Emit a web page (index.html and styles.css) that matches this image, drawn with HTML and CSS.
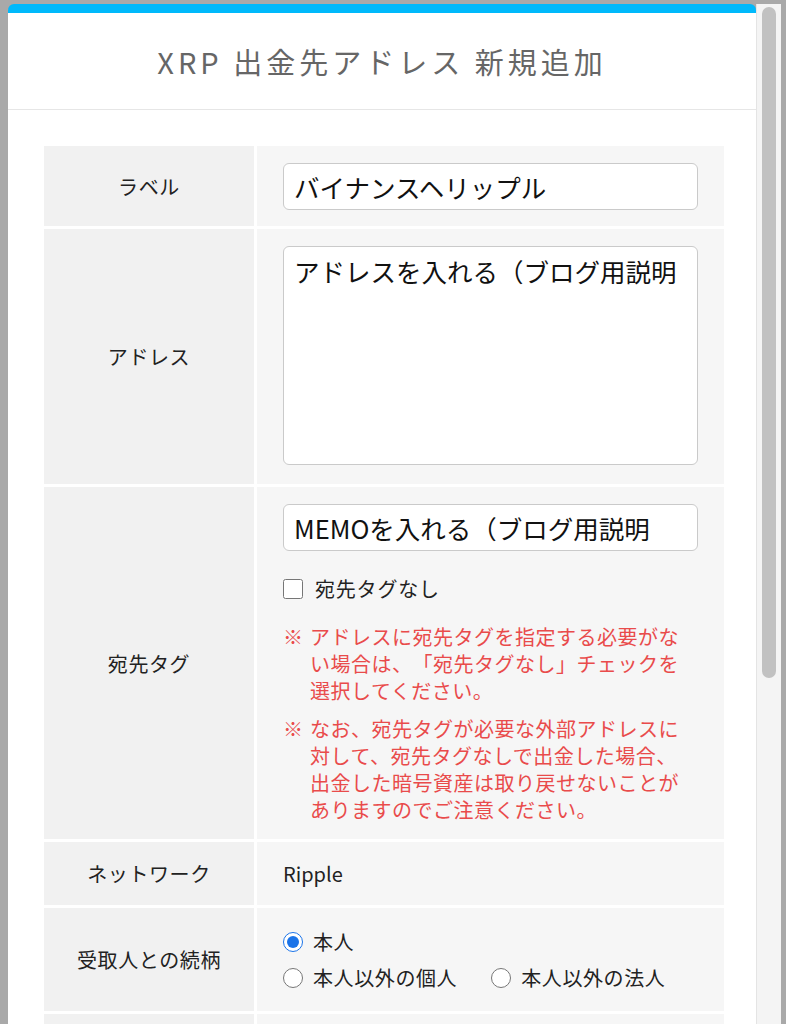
FILE: index.html
```html
<!DOCTYPE html>
<html lang="ja">
<head>
  <meta charset="UTF-8">
  <title>XRP 出金先アドレス 新規追加</title>
  <link rel="stylesheet" href="styles.css">
</head>
<body>
  <div class="screen">
    <div class="modal">
      <div class="modal-head">
        <h1>XRP 出金先アドレス 新規追加</h1>
      </div>

      <div class="modal-body">
        <div class="form-grid">
          <div class="label">ラベル</div>
          <div class="value">
            <input type="text" class="text-input" value="バイナンスヘリップル">
          </div>

          <div class="label">アドレス</div>
          <div class="value">
            <textarea class="text-area">アドレスを入れる（ブログ用説明</textarea>
          </div>

          <div class="label">宛先タグ</div>
          <div class="value">
            <input type="text" class="text-input" value="MEMOを入れる（ブログ用説明">
            <label class="check">
              <input type="checkbox">
              <span>宛先タグなし</span>
            </label>
            <div class="note">
              <span class="mark">※</span>
              <p>アドレスに宛先タグを指定する必要がない場合は、「宛先タグなし」チェックを選択してください。</p>
            </div>
            <div class="note">
              <span class="mark">※</span>
              <p>なお、宛先タグが必要な外部アドレスに対して、宛先タグなしで出金した場合、出金した暗号資産は取り戻せないことがありますのでご注意ください。</p>
            </div>
          </div>

          <div class="label">ネットワーク</div>
          <div class="value plain">Ripple</div>

          <div class="label">受取人との続柄</div>
          <div class="value radios">
            <label class="radio"><input type="radio" name="rel" checked> 本人</label>
            <div class="radio-row">
              <label class="radio"><input type="radio" name="rel"> 本人以外の個人</label>
              <label class="radio"><input type="radio" name="rel"> 本人以外の法人</label>
            </div>
          </div>

          <!-- 次の行（画面外） -->
          <div class="label empty"></div>
          <div class="value empty"></div>
        </div>
      </div>
    </div>

    <div class="scrollbar"><div class="thumb"></div></div>
  </div>
</body>
</html>
```

FILE: styles.css
```css
body { margin: 0; background: #a9a9a9; height: 1024px; overflow: hidden; font-family: "Noto Sans CJK JP", "Noto Sans", sans-serif; color: #222; text-spacing-trim: space-all; }
.screen { display: flex; align-items: flex-start; padding: 4px 0 0 8px; }

.modal { width: 748px; min-height: 1100px; background: #fff; border-top: 9px solid #00b9fb; border-radius: 6px 6px 0 0; }
.modal-head { height: 96px; border-bottom: 1px solid #e6e6e6; display: flex; align-items: center; justify-content: center; }
.modal-head h1 { margin: 0; font-size: 29px; font-weight: 400; letter-spacing: 4px; color: #666; }
.modal-body { padding: 36px 32px 0 36px; }

.form-grid { display: grid; grid-template-columns: 210px 1fr; gap: 3px; }
.label { background: #f1f1f1; display: flex; align-items: center; justify-content: center; font-size: 20px; letter-spacing: 0.6px; }
.value { background: #f6f6f6; padding: 17px 26px 16px; }
.value.plain { font-size: 20px; line-height: 30px; }
.empty { height: 80px; padding: 0; }

.text-input { display: block; width: 100%; height: 47px; box-sizing: border-box; margin: 0; padding: 0 10px; border: 1px solid #cacaca; border-radius: 6px; background: #fff; font: 25.5px "Noto Sans CJK JP", sans-serif; color: #111; }
.text-area { display: block; width: 100%; height: 219px; box-sizing: border-box; margin: 0 0 3px; padding: 6px 10px; border: 1px solid #cacaca; border-radius: 6px; background: #fff; font: 25.5px/1.4 "Noto Sans CJK JP", sans-serif; color: #111; resize: none; }

.check { display: flex; align-items: center; gap: 12px; margin: 24px 0 20px; font-size: 20px; line-height: 28px; letter-spacing: 0.8px; }
.check input { width: 20px; height: 20px; margin: 0; }

.note { display: flex; color: #e94b4b; font-size: 20px; line-height: 27px; letter-spacing: 0.5px; }
.note + .note { margin-top: 11px; }
.note .mark { width: 27px; flex: none; letter-spacing: 0; }
.note p { width: 372px; margin: 0; }

.radios { padding: 16px 26px 15px; font-size: 20px; line-height: 36px; letter-spacing: 0.6px; }
.radio-row { display: flex; gap: 34px; }
.radio { display: flex; align-items: center; gap: 10px; }
.radio input { width: 20px; height: 20px; margin: 0; accent-color: #1a73e8; }

.scrollbar { width: 25px; height: 1020px; box-sizing: border-box; padding: 3px 5px 0 5px; background: #f4f4f4; border-left: 1px solid #e4e4e4; }
.thumb { height: 671px; background: #c1c1c1; border-radius: 7px; }
```
